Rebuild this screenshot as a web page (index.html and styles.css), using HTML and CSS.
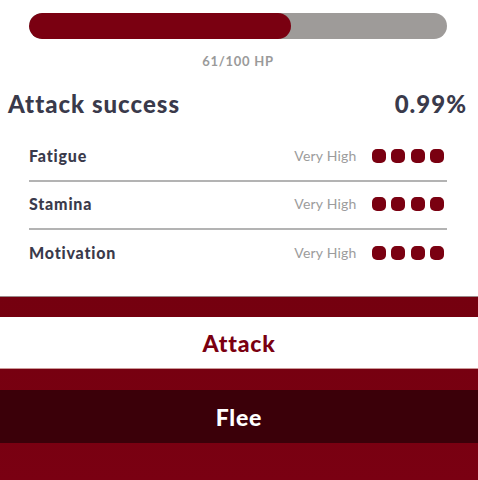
FILE: index.html
```html
<!DOCTYPE html>
<html>
<head>
<meta charset="utf-8">
<link rel="stylesheet" href="styles.css">
</head>
<body>
<div class="page">
  <section class="hp">
    <div class="bar"><div class="fill" style="width:62.7%"></div></div>
    <div class="hp-label">61/100 HP</div>
  </section>
  <section class="success">
    <span class="success-title">Attack success</span>
    <span class="success-value">0.99%</span>
  </section>
  <section class="stats">
    <div class="stat">
      <span class="stat-name">Fatigue</span>
      <span class="stat-right"><span class="stat-level">Very High</span><span class="dots"><i></i><i></i><i></i><i></i></span></span>
    </div>
    <div class="stat">
      <span class="stat-name">Stamina</span>
      <span class="stat-right"><span class="stat-level">Very High</span><span class="dots"><i></i><i></i><i></i><i></i></span></span>
    </div>
    <div class="stat">
      <span class="stat-name">Motivation</span>
      <span class="stat-right"><span class="stat-level">Very High</span><span class="dots"><i></i><i></i><i></i><i></i></span></span>
    </div>
  </section>
  <section class="actions">
    <div class="btn btn-attack">Attack</div>
    <div class="btn btn-flee">Flee</div>
  </section>
</div>
</body>
</html>
```

FILE: styles.css
```css
html, body {
  margin: 0;
  padding: 0;
  background: #ffffff;
}
body {
  font-family: Lato, "Noto Sans", "Liberation Sans", sans-serif;
  color: #3a3a4b;
}
.page {
  width: 478px;
  height: 480px;
  display: flex;
  flex-direction: column;
  overflow: hidden;
}
.hp {
  padding: 13px 31px 0 29px;
}
.bar {
  height: 26px;
  border-radius: 13px;
  background: #9e9b99;
  overflow: hidden;
}
.fill {
  height: 100%;
  background: #7a0011;
  border-radius: 13px;
}
.hp-label {
  text-align: center;
  font-size: 13px;
  font-weight: 700;
  color: #9a9a9a;
  margin-top: 14px;
  letter-spacing: 0.7px;
}
.success {
  display: flex;
  justify-content: space-between;
  align-items: center;
  padding: 0 12px 0 8px;
  margin-top: 17px;
  height: 34px;
  font-size: 24px;
  font-weight: 900;
  letter-spacing: 1px;
  color: #3a3a4b;
}
.success-value {
  letter-spacing: 1px;
  margin-right: -1px;
}
.stats {
  padding: 0 31px 0 29px;
  margin-top: 14px;
}
.stat {
  height: 48px;
  box-sizing: border-box;
  padding-bottom: 3px;
  display: flex;
  justify-content: space-between;
  align-items: center;
  border-bottom: 2px solid #b3b3b3;
}
.stat:last-child {
  border-bottom: none;
}
.stat-name {
  font-size: 16px;
  font-weight: 900;
  letter-spacing: 0.8px;
  color: #3a3a4b;
}
.stat-right {
  display: flex;
  align-items: center;
  gap: 15px;
}
.stat-level {
  font-size: 14px;
  color: #9c9c9c;
  letter-spacing: 0.2px;
}
.dots {
  display: flex;
  gap: 5.5px;
  margin-right: 3px;
}
.dots i {
  width: 14px;
  height: 14px;
  border-radius: 5px;
  background: #7a0011;
}
.actions {
  margin-top: auto;
  height: 184px;
  border-top: 1px solid #9a8a8a;
  background: linear-gradient(#75000f, #7a0012);
  padding-top: 20px;
  box-sizing: border-box;
  display: flex;
  flex-direction: column;
  gap: 21px;
}
.btn {
  height: 52px;
  display: flex;
  align-items: center;
  justify-content: center;
  font-size: 23px;
  font-weight: 900;
  letter-spacing: 0.8px;
}
.btn-attack {
  background: #ffffff;
  color: #7a0011;
  border-bottom: 1px solid #c99;
  box-sizing: border-box;
}
.btn-flee {
  background: #3b0009;
  color: #ffffff;
  height: 53px;
}
```
